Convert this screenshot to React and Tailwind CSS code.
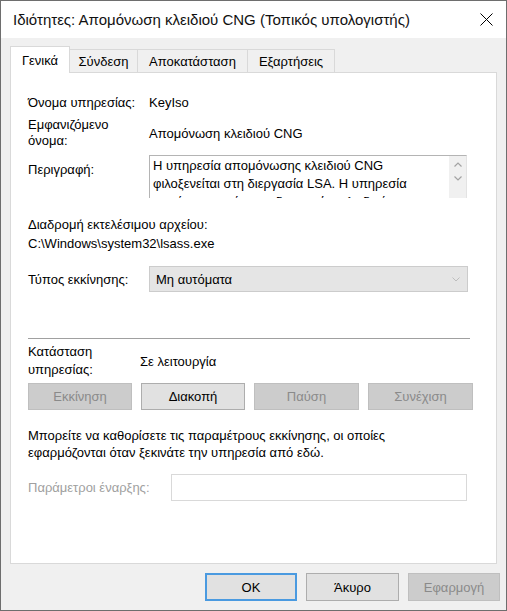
import React from "react";

function Btn({ children, disabled, className = "" }) {
  return (
    <div
      className={
        "flex items-center justify-center border " +
        (disabled
          ? "bg-[#cccccc] border-[#bfbfbf] text-[#8a8a8a] "
          : "bg-[#e1e1e1] border-[#adadad] text-black ") +
        className
      }
    >
      {children}
    </div>
  );
}

export default function App() {
  return (
    <div className="w-[507px] h-[611px] bg-[#f0f0f0] border border-[#6e6e6e] flex flex-col font-['Liberation_Sans',Arial,sans-serif] text-[13px] leading-[17px] text-black overflow-hidden">
      {/* Title bar */}
      <div className="h-[37px] bg-white flex items-center justify-between pl-[12px] pr-[12px] shrink-0">
        <span className="text-[15px] text-[#111]">Ιδιότητες: Απομόνωση κλειδιού CNG (Τοπικός υπολογιστής)</span>
        <svg width="13" height="13" viewBox="0 0 13 13" className="mr-[1px]">
          <path d="M0.5 0.5 L12.5 12.5 M12.5 0.5 L0.5 12.5" stroke="#000" strokeWidth="1" fill="none" />
        </svg>
      </div>

      {/* Tabs + panel */}
      <div className="flex flex-col px-[9px] pt-[7px]">
        <div className="flex items-end h-[27px]">
          <div className="relative z-10 -mb-px w-[60px] h-[27px] bg-white border border-[#d9d9d9] border-b-0 flex items-center justify-center">
            Γενικά
          </div>
          <div className="w-[68px] h-[23px] bg-[#f0f0f0] border border-[#d9d9d9] border-l-0 border-b-0 flex items-center justify-center">
            Σύνδεση
          </div>
          <div className="w-[110px] h-[23px] bg-[#f0f0f0] border border-[#d9d9d9] border-l-0 border-b-0 flex items-center justify-center">
            Αποκατάσταση
          </div>
          <div className="w-[87px] h-[23px] bg-[#f0f0f0] border border-[#d9d9d9] border-l-0 border-b-0 flex items-center justify-center">
            Εξαρτήσεις
          </div>
        </div>

        <div className="h-[492px] bg-white border border-[#d9d9d9] pl-[17px] flex flex-col">
          {/* Service name */}
          <div className="flex mt-[21px]">
            <div className="w-[121px] shrink-0">Όνομα υπηρεσίας:</div>
            <div>KeyIso</div>
          </div>
          {/* Display name */}
          <div className="flex items-center mt-[6px]">
            <div className="w-[121px] shrink-0 leading-[16px]">
              Εμφανιζόμενο
              <br />
              όνομα:
            </div>
            <div>Απομόνωση κλειδιού CNG</div>
          </div>
          {/* Description */}
          <div className="flex mt-[6px]">
            <div className="w-[121px] shrink-0 pt-[6px]">Περιγραφή:</div>
            <div className="w-[318px] h-[43px] border border-[#b4b4b4] border-r-[#e3e3e3] border-b-0 flex overflow-hidden">
              <div className="flex-1 h-[43px] pl-[3px] pt-[1px] leading-[18px] overflow-hidden">
                Η υπηρεσία απομόνωσης κλειδιού CNG φιλοξενείται στη διεργασία LSA. Η υπηρεσία παρέχει απομόνωση διεργασίας κλειδιού σε ιδιωτικά κλειδιά.
              </div>
              <div className="w-[17px] h-[43px] bg-[#f0f0f0] flex flex-col items-center justify-start pt-[6px] gap-[9px]">
                <svg width="8" height="5" viewBox="0 0 8 5">
                  <path d="M0.5 4.5 L4 1 L7.5 4.5" stroke="#a3a3a3" strokeWidth="1.2" fill="none" />
                </svg>
                <svg width="8" height="5" viewBox="0 0 8 5">
                  <path d="M0.5 0.5 L4 4 L7.5 0.5" stroke="#a3a3a3" strokeWidth="1.2" fill="none" />
                </svg>
              </div>
            </div>
          </div>
          {/* Path */}
          <div className="mt-[18px]">Διαδρομή εκτελέσιμου αρχείου:</div>
          <div className="mt-[2px]">C:\Windows\system32\lsass.exe</div>
          {/* Startup type */}
          <div className="flex items-center mt-[14px]">
            <div className="w-[121px] shrink-0">Τύπος εκκίνησης:</div>
            <div className="w-[319px] h-[26px] bg-[#e5e5e5] border border-[#cccccc] flex items-center justify-between pl-[6px] pr-[7px]">
              <span>Μη αυτόματα</span>
              <svg width="8" height="5" viewBox="0 0 8 5">
                <path d="M0.5 0.5 L4 4 L7.5 0.5" stroke="#bdbdbd" strokeWidth="1" fill="none" />
              </svg>
            </div>
          </div>
          {/* Separator */}
          <div className="w-[442px] h-px bg-[#a0a0a0] mt-[46px]" />
          {/* Status */}
          <div className="flex items-center mt-[4px]">
            <div className="w-[112px] shrink-0 leading-[18px]">
              Κατάσταση
              <br />
              υπηρεσίας:
            </div>
            <div>Σε λειτουργία</div>
          </div>
          <div className="flex gap-[9px] mt-[4px]">
            <Btn disabled className="w-[104px] h-[27px]">Εκκίνηση</Btn>
            <Btn className="w-[104px] h-[27px]">Διακοπή</Btn>
            <Btn disabled className="w-[105px] h-[27px]">Παύση</Btn>
            <Btn disabled className="w-[105px] h-[27px]">Συνέχιση</Btn>
          </div>
          {/* Info text */}
          <div className="mt-[17px]">
            Μπορείτε να καθορίσετε τις παραμέτρους εκκίνησης, οι οποίες
            <br />
            εφαρμόζονται όταν ξεκινάτε την υπηρεσία από εδώ.
          </div>
          {/* Params */}
          <div className="flex items-center mt-[13px]">
            <div className="w-[143px] shrink-0 text-[#a0a0a0]">Παράμετροι έναρξης:</div>
            <div className="w-[296px] h-[27px] bg-white border border-[#d9d9d9]" />
          </div>
        </div>
      </div>

      {/* Bottom buttons */}
      <div className="flex justify-end gap-[9px] pr-[6px] mt-[9px]">
        <div className="w-[92px] h-[28px] bg-[#e1e1e1] border-2 border-[#4a9ae0] flex items-center justify-center">OK</div>
        <Btn className="w-[93px] h-[28px]">Άκυρο</Btn>
        <Btn disabled className="w-[92px] h-[28px]">Εφαρμογή</Btn>
      </div>
    </div>
  );
}
